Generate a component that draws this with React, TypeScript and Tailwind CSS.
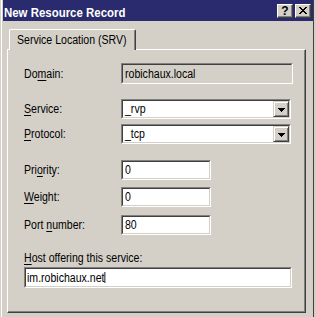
import React from "react";

const S = ({ children, className = "" }: { children: React.ReactNode; className?: string }) => (
  <span className={"inline-block origin-left scale-x-[0.88] whitespace-nowrap " + className}>{children}</span>
);

const U = ({ children }: { children: React.ReactNode }) => (
  <span className="underline underline-offset-[2px] decoration-[1px]">{children}</span>
);

function Sunken({
  className = "",
  inner = "",
  children,
}: {
  className?: string;
  inner?: string;
  children?: React.ReactNode;
}) {
  return (
    <div
      className={
        "border-t border-l border-b border-r border-t-[#808080] border-l-[#808080] border-b-white border-r-white " +
        className
      }
    >
      <div
        className={
          "h-full w-full border-t border-l border-b border-r border-t-[#404040] border-l-[#404040] border-b-[#d4d0c8] border-r-[#d4d0c8] flex items-center " +
          inner
        }
      >
        {children}
      </div>
    </div>
  );
}

function Arrow() {
  return (
    <svg width="7" height="4" viewBox="0 0 7 4" shapeRendering="crispEdges">
      <rect x="0" y="0" width="7" height="1" fill="#000" />
      <rect x="1" y="1" width="5" height="1" fill="#000" />
      <rect x="2" y="2" width="3" height="1" fill="#000" />
      <rect x="3" y="3" width="1" height="1" fill="#000" />
    </svg>
  );
}

function Combo({ value }: { value: string }) {
  return (
    <Sunken className="w-[170px] h-[20px]" inner="bg-white">
      <div className="flex-1 pl-[2px] text-[12px] leading-[14px] text-black">
        <S>{value}</S>
      </div>
      <div className="w-[16px] h-full border-t border-l border-b border-r border-t-[#d4d0c8] border-l-[#d4d0c8] border-b-[#404040] border-r-[#404040] bg-[#d4d0c8] flex items-center justify-center">
        <div className="w-full h-full border-t border-l border-t-white border-l-white shadow-[inset_-1px_-1px_#808080] flex items-center justify-center">
          <Arrow />
        </div>
      </div>
    </Sunken>
  );
}

function Row({
  label,
  className,
  children,
}: {
  label: React.ReactNode;
  className: string;
  children: React.ReactNode;
}) {
  return (
    <div className={"flex items-center pl-[16px] " + className}>
      <div className="w-[97px] text-[12px] leading-[14px] text-black">
        <S>{label}</S>
      </div>
      {children}
    </div>
  );
}

function CapBtn({ children }: { children: React.ReactNode }) {
  return (
    <div className="w-[16px] h-[14px] bg-[#d4d0c8] border-t border-l border-b border-r border-t-white border-l-white border-b-[#404040] border-r-[#404040] shadow-[inset_-1px_-1px_#808080] flex items-center justify-center">
      {children}
    </div>
  );
}

function CloseX() {
  const rows: [number, number][][] = [
    [[0, 2], [6, 2]],
    [[1, 2], [5, 2]],
    [[2, 4]],
    [[3, 2]],
    [[2, 4]],
    [[1, 2], [5, 2]],
    [[0, 2], [6, 2]],
  ];
  return (
    <svg width="8" height="7" viewBox="0 0 8 7" shapeRendering="crispEdges">
      {rows.map((r, y) =>
        r.map(([x, w], i) => <rect key={y + "-" + i} x={x} y={y} width={w} height="1" fill="#000" />)
      )}
    </svg>
  );
}

export default function App() {
  return (
    <div className="w-[316px] h-[317px] bg-[#d4d0c8] pl-[1px] pr-[2px] overflow-hidden font-['Liberation_Sans',Arial,sans-serif]">
      <div className="h-full border-l border-r border-l-white border-r-[#404040] pl-[1px]">
        {/* Title bar */}
        <div className="h-[21px] bg-[#2a2a6e] flex items-center justify-between pl-[1px] pr-[2px]">
          <div className="text-white font-bold text-[13px] leading-[14px] translate-y-[2px]">
            <S>New Resource Record</S>
          </div>
          <div className="flex gap-[2px]">
            <CapBtn>
              <span className="text-[12px] leading-[12px] font-bold text-black">?</span>
            </CapBtn>
            <CapBtn>
              <CloseX />
            </CapBtn>
          </div>
        </div>

        {/* Body */}
        <div className="pl-[4px] pr-[7px] pt-[8px]">
          {/* Tab */}
          <div className="ml-[2px] w-[127px] h-[21px] -mb-[1px] relative z-10 bg-[#d4d0c8] border-l border-t border-r border-l-white border-t-white border-r-[#404040] rounded-tl-[2px] rounded-tr-[2px] shadow-[inset_-1px_0_#808080] pl-[7px] pt-[3px]">
            <div className="text-[12px] leading-[14px] text-black">
              <S>Service Location (SRV)</S>
            </div>
          </div>
          {/* Panel */}
          <div className="w-[299px] h-[264px] border-t border-l border-b border-r border-t-white border-l-white border-b-[#404040] border-r-[#404040] shadow-[inset_-1px_-1px_#808080]">
            <Row className="mt-[13px]" label={<>Do<U>m</U>ain:</>}>
              <Sunken className="w-[172px] h-[21px]" inner="bg-[#d4d0c8] pl-[2px]">
                <div className="text-[12px] leading-[14px] text-black">
                  <S>robichaux.local</S>
                </div>
              </Sunken>
            </Row>
            <Row className="mt-[15px]" label={<><U>S</U>ervice:</>}>
              <Combo value="_rvp" />
            </Row>
            <Row className="mt-[5px]" label={<><U>P</U>rotocol:</>}>
              <Combo value="_tcp" />
            </Row>
            <Row className="mt-[16px]" label={<>Pri<U>o</U>rity:</>}>
              <Sunken className="w-[90px] h-[20px]" inner="bg-white pl-[2px]">
                <div className="text-[12px] leading-[14px] text-black">
                  <S>0</S>
                </div>
              </Sunken>
            </Row>
            <Row className="mt-[7px]" label={<><U>W</U>eight:</>}>
              <Sunken className="w-[90px] h-[20px]" inner="bg-white pl-[2px]">
                <div className="text-[12px] leading-[14px] text-black">
                  <S>0</S>
                </div>
              </Sunken>
            </Row>
            <Row className="mt-[8px]" label={<>Port <U>n</U>umber:</>}>
              <Sunken className="w-[90px] h-[20px]" inner="bg-white pl-[2px]">
                <div className="text-[12px] leading-[14px] text-black">
                  <S>80</S>
                </div>
              </Sunken>
            </Row>
            <div className="pl-[16px] mt-[16px] text-[12px] leading-[14px] text-black">
              <S>
                <U>H</U>ost offering this service:
              </S>
            </div>
            <div className="pl-[16px] mt-[2px]">
              <Sunken className="w-[268px] h-[21px]" inner="bg-white pl-[1px]">
                <div className="text-[12px] leading-[14px] text-black">
                  <S>
                    im.robichaux.net
                    <span className="inline-block w-[1.2px] h-[11px] bg-black align-[-1px]" />
                  </S>
                </div>
              </Sunken>
            </div>
          </div>
        </div>
      </div>
    </div>
  );
}
